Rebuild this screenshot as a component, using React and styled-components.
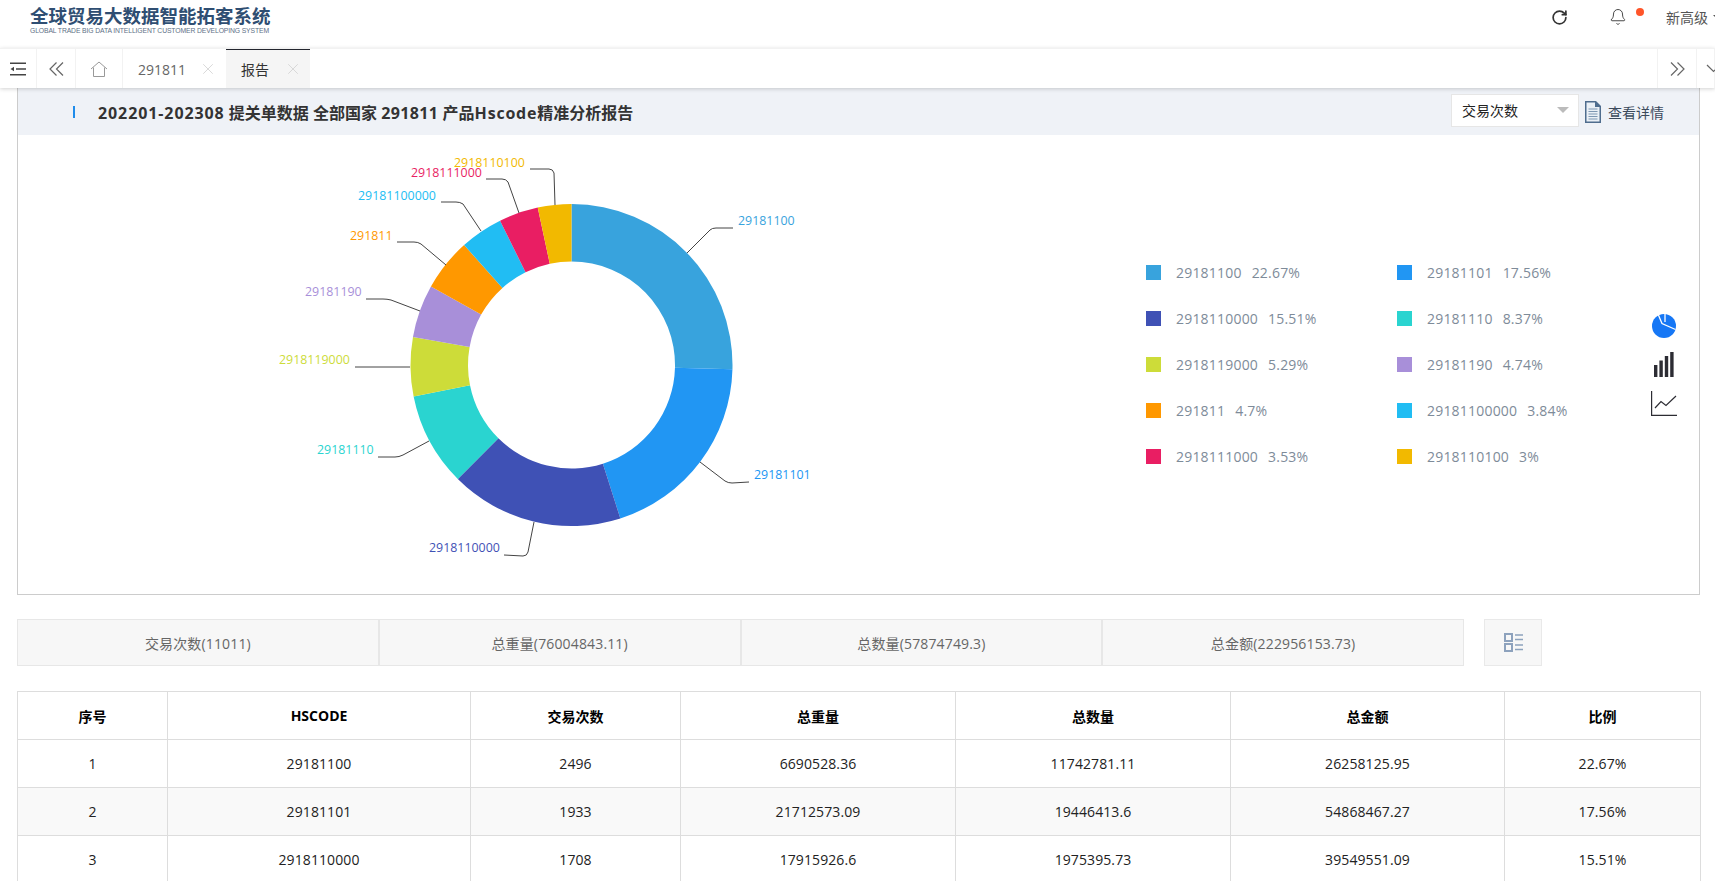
import React from 'react'
import styled, { createGlobalStyle } from 'styled-components'
import { RotateCw, Bell, X } from 'lucide-react'

const GlobalStyle = createGlobalStyle`
  html, body {
    margin: 0;
    padding: 0;
    height: 100%;
    overflow: hidden;
    background: #fff;
    font-family: "Open Sans", "Noto Sans CJK SC", sans-serif;
    font-size: 14px;
    color: #333;
  }
`

const Page = styled.div`
  height: 881px;
  overflow: hidden;
`

const Header = styled.header`
  height: 48px;
  box-sizing: border-box;
  display: flex;
  align-items: flex-start;
  padding-left: 30px;
  overflow: hidden;
`

const Logo = styled.div`
  display: flex;
  flex-direction: column;
  width: 245px;
`

const LogoTitle = styled.div`
  font-family: "Noto Sans CJK SC", sans-serif;
  font-size: 18.5px;
  font-weight: 700;
  line-height: 20px;
  margin-top: 5px;
  color: #2f4e72;
  white-space: nowrap;
`

const LogoSub = styled.div`
  font-family: "Liberation Sans", sans-serif;
  font-size: 6.8px;
  line-height: 8px;
  margin-top: 2px;
  color: #5d6f85;
  white-space: nowrap;
  letter-spacing: -0.12px;
`

const HeaderRight = styled.div`
  margin-left: auto;
  margin-right: -6px;
  height: 34px;
  display: flex;
  align-items: center;
  color: #333;
`

const Refresh = styled(RotateCw)`
  width: 17px;
  height: 17px;
  color: #333;
  margin-right: 41px;
`

const BellWrap = styled.div`
  position: relative;
  width: 18px;
  height: 18px;
  margin-right: 39px;
  color: #444;
`

const BellDot = styled.span`
  position: absolute;
  top: 0;
  left: 27px;
  width: 8px;
  height: 8px;
  border-radius: 50%;
  background: #ff5529;
`

const UserName = styled.span`
  font-size: 14px;
  color: #555;
`

const Caret = styled.span`
  margin-left: 5px;
  width: 0;
  height: 0;
  border: 4px solid transparent;
  border-top-color: #555;
  border-bottom: 0;
`

const TabBar = styled.nav`
  position: relative;
  z-index: 1;
  height: 40px;
  box-sizing: border-box;
  display: flex;
  border-top: 1px solid #f2f2f2;
  box-shadow: 0 1px 4px rgba(0, 0, 0, 0.18);
  background: #fff;
  overflow: hidden;
`

const IconCell = styled.div`
  width: ${p => p.$w}px;
  flex: none;
  box-sizing: border-box;
  display: flex;
  align-items: center;
  justify-content: center;
  border-right: 1px solid #f2f2f2;
  color: #666;
`

const Tab = styled.div`
  width: ${p => p.$w}px;
  flex: none;
  box-sizing: border-box;
  margin-top: -1px;
  padding-left: 15px;
  display: flex;
  align-items: center;
  border-top: 2px solid ${p => (p.$active ? '#23262e' : 'transparent')};
  background: ${p => (p.$active ? '#f5f5f5' : 'transparent')};
  color: ${p => (p.$active ? '#333' : '#666')};
  font-size: 14px;
`

const TabClose = styled(X)`
  width: 18px;
  height: 18px;
  margin-left: ${p => p.$gap}px;
  color: #d2d2d2;
  stroke-width: 1.1;
`

const TabRight = styled.div`
  margin-left: auto;
  display: flex;
  width: 58px;
  flex: none;
`

const LastCell = styled(IconCell)`
  border-left: 1px solid #f2f2f2;
`

const DownIcon = styled.svg`
  flex: none;
  margin-left: 16px;
`

const Main = styled.main`
  padding: 0 15px 0 17px;
`

const ReportBox = styled.section`
  border: 1px solid #ccc;
  border-top: 0;
`

const TitleBar = styled.div`
  height: 47px;
  display: flex;
  align-items: center;
  padding: 0 35px 0 55px;
  background: #eff2f7;
`

const Marker = styled.span`
  width: 2px;
  height: 12px;
  margin: 0 23px 0 0;
  background: #1f8ceb;
`

const Title = styled.h2`
  margin: 0;
  font-size: 16px;
  font-weight: 700;
  color: #333;
`

const WideRun = styled.span`
  letter-spacing: ${p => p.$gap}px;
`

const Picker = styled.div`
  margin-left: auto;
  width: 128px;
  height: 33px;
  box-sizing: border-box;
  padding: 0 9px 0 10px;
  margin-top: -3px;
  display: flex;
  align-items: center;
  justify-content: space-between;
  background: #fff;
  border: 1px solid #e6e6e6;
  color: #222;
  font-size: 14px;
`

const PickerArrow = styled.span`
  width: 0;
  height: 0;
  border-style: solid;
  border-width: 6px 6px 0;
  border-color: #bbb transparent transparent;
`

const DetailLink = styled.a`
  display: flex;
  align-items: center;
  gap: 7px;
  margin-left: 6px;
  color: #3b4a5c;
  font-size: 14px;
`

const ChartBody = styled.div`
  height: 459px;
  display: flex;
  align-items: center;
`

const ChartSvg = styled.svg`
  flex: none;
  width: 800px;
  height: 459px;
  font-family: "Open Sans", sans-serif;
  font-size: 12.4px;
`

const Legend = styled.ul`
  list-style: none;
  margin: 0 0 1px 328px;
  padding: 0;
  flex: none;
  width: 502px;
  display: grid;
  grid-template-columns: 251px 251px;
  grid-auto-rows: 46px;
  align-items: center;
`

const LegendItem = styled.li`
  display: flex;
  align-items: center;
  color: #7e8b99;
  font-size: 14px;
  letter-spacing: 0.2px;
`

const Swatch = styled.span`
  width: 15px;
  height: 15px;
  margin-right: 15px;
  background: ${p => p.$color};
`

const Percent = styled.span`
  margin-left: 10px;
`

const ChartTypes = styled.div`
  margin-left: 3px;
  display: flex;
  flex-direction: column;
  align-items: center;
  gap: 14px;
  width: 26px;
`

const Stats = styled.div`
  margin-top: 24px;
  display: flex;
  gap: 20px;
`

const StatGroup = styled.div`
  width: 1447px;
  display: flex;
`

const Stat = styled.div`
  flex: 1;
  height: 47px;
  box-sizing: border-box;
  display: flex;
  align-items: center;
  justify-content: center;
  background: #f7f7f7;
  border: 1px solid #e7e7e7;
  color: #666;
  font-size: 14px;
  letter-spacing: 0.15px;
`

const ListButton = styled.button`
  width: 58px;
  height: 47px;
  padding: 0;
  display: flex;
  align-items: center;
  justify-content: center;
  background: #f7f7f7;
  border: 1px solid #e9e9e9;
`

const Table = styled.table`
  margin-top: 25px;
  width: 1683px;
  table-layout: fixed;
  border-collapse: collapse;
  font-size: 14px;
  color: #222;

  th, td {
    height: 48px;
    padding: 0;
    box-sizing: border-box;
    text-align: center;
    border: 1px solid #ddd;
  }

  th {
    font-weight: 700;
    color: #000;
  }

  td {
    letter-spacing: 0.1px;
  }

  tbody tr:nth-child(even) {
    background: #f9f9f9;
  }
`

const slices = [
  { name: '29181100', pct: 22.67, color: '#38a3dd', text: [738, 225], line: 'M687 253 L710 230 Q712 228 716 228 L733 228' },
  { name: '29181101', pct: 17.56, color: '#2196f3', text: [754, 479], line: 'M700 462 L725 481 Q728 483 732 483 L749 482' },
  { name: '2918110000', pct: 15.51, color: '#3f51b5', text: [429, 552], line: 'M534 522 L528 552 Q527 556 523 556 L504 555' },
  { name: '29181110', pct: 8.37, color: '#2ad4d0', text: [317, 454], line: 'M429 441 L403 455 Q399 457 395 457 L378 457' },
  { name: '2918119000', pct: 5.29, color: '#cddc39', text: [279, 364], line: 'M410 367 L355 367' },
  { name: '29181190', pct: 4.74, color: '#a88fd9', text: [305, 296], line: 'M420 311 L391 300 Q387 299 383 299 L366 299' },
  { name: '291811', pct: 4.7, color: '#ff9800', text: [350, 240], line: 'M446 265 L421 244 Q418 242 414 242 L397 242' },
  { name: '29181100000', pct: 3.84, color: '#21bdf3', text: [358, 200], line: 'M481 231 L463 204 Q460 202 456 202 L441 202' },
  { name: '2918111000', pct: 3.53, color: '#e91e63', text: [411, 177], line: 'M519 213 L508 182 Q506 179 502 179 L486 179' },
  { name: '2918110100', pct: 3, color: '#f2b900', text: [454, 167], line: 'M555 205 L554 173 Q553 169 549 169 L530 169' }
]

const CX = 571.5
const CY = 365
const R1 = 161
const R0 = 103.5

function arcPath (start, end) {
  const pt = (r, a) => [CX + r * Math.sin(a), CY - r * Math.cos(a)].map(n => n.toFixed(2)).join(' ')
  const large = end - start > Math.PI ? 1 : 0
  return `M${pt(R1, start)} A${R1} ${R1} 0 ${large} 1 ${pt(R1, end)} L${pt(R0, end)} A${R0} ${R0} 0 ${large} 0 ${pt(R0, start)} Z`
}

function Donut () {
  const total = slices.reduce((sum, s) => sum + s.pct, 0)
  let angle = 0
  return (
    <ChartSvg viewBox="18 135 800 459">
      {slices.map(s => {
        const start = angle
        angle += (s.pct / total) * Math.PI * 2
        return <path key={s.name} d={arcPath(start, angle)} fill={s.color} />
      })}
      {slices.map(s => (
        <g key={s.name}>
          <path d={s.line} fill="none" stroke="#444" strokeWidth="1" />
          <text x={s.text[0]} y={s.text[1]} fill={s.color}>{s.name}</text>
        </g>
      ))}
    </ChartSvg>
  )
}

const stats = ['交易次数(11011)', '总重量(76004843.11)', '总数量(57874749.3)', '总金额(222956153.73)']

const columns = [150, 303, 210, 275, 275, 274, 196]
const headers = ['序号', 'HSCODE', '交易次数', '总重量', '总数量', '总金额', '比例']
const rows = [
  ['1', '29181100', '2496', '6690528.36', '11742781.11', '26258125.95', '22.67%'],
  ['2', '29181101', '1933', '21712573.09', '19446413.6', '54868467.27', '17.56%'],
  ['3', '2918110000', '1708', '17915926.6', '1975395.73', '39549551.09', '15.51%']
]

function MenuIcon () {
  return (
    <svg width="16" height="14" viewBox="0 0 16 14" fill="none" stroke="#444" strokeWidth="1.5">
      <path d="M0 1.2H16M0 12.8H16M6 7H16" />
      <path d="M0.5 7L4 4.8V9.2Z" fill="#444" stroke="none" />
    </svg>
  )
}

function ChevronsIcon ({ flip }) {
  return (
    <svg width="15" height="14" viewBox="0 0 15 14" fill="none" stroke="#666" strokeWidth="1.2">
      <path d={flip ? 'M1 0.5L7.5 7L1 13.5M7.5 0.5L14 7L7.5 13.5' : 'M7.5 0.5L1 7L7.5 13.5M14 0.5L7.5 7L14 13.5'} />
    </svg>
  )
}

function HomeIcon () {
  return (
    <svg width="18" height="16" viewBox="0 0 18 16" fill="none" stroke="#999" strokeWidth="1">
      <path d="M1 8L9 1L17 8M3.5 6.5V15.5H14.5V6.5" />
    </svg>
  )
}

function DocIcon () {
  return (
    <svg width="16" height="22" viewBox="0 0 16 22">
      <path d="M0 0H11L16 5V22H0Z" fill="#4f6d8e" />
      <path d="M1.5 1.5H10V6H14.5V20.5H1.5Z" fill="#eaf0f6" />
      <path d="M3.5 8H12.5M3.5 10.5H12.5M3.5 13H12.5M3.5 15.5H12.5M3.5 18H12.5" stroke="#7d97b3" strokeWidth="1" />
    </svg>
  )
}

function PieIcon () {
  return (
    <svg width="24" height="25" viewBox="0 0 24 25">
      <circle cx="12" cy="13" r="12" fill="#1677f5" />
      <path d="M6 1L10 10.5L23.5 16.5M13 0V9" fill="none" stroke="#fff" strokeWidth="1.3" />
    </svg>
  )
}

function BarsIcon () {
  return (
    <svg width="20" height="25" viewBox="0 0 20 25" fill="#2c2c33">
      <rect x="0" y="13" width="3.4" height="12" />
      <rect x="5.4" y="8.5" width="3.4" height="16.5" />
      <rect x="10.8" y="4" width="3.4" height="21" />
      <rect x="16.2" y="0" width="3.4" height="25" />
    </svg>
  )
}

function LineIcon () {
  return (
    <svg width="26" height="25" viewBox="0 0 26 25" fill="none" stroke="#2c2c33" strokeWidth="1.2">
      <path d="M0.6 0V24.4H26" />
      <path d="M4 17L10 10.5L15 14.5L25 5" />
    </svg>
  )
}

function ListIcon () {
  return (
    <svg width="19" height="20" viewBox="0 0 19 20" fill="none" stroke="#8da2bd" strokeWidth="2">
      <rect x="1" y="1" width="7" height="7" />
      <rect x="1" y="11" width="7" height="7" />
      <path d="M11 2H19M11 6.5H19M11 12H19M11 16.5H19" strokeWidth="1.4" />
    </svg>
  )
}

export default function App () {
  return (
    <Page>
      <GlobalStyle />
      <Header>
        <Logo>
          <LogoTitle>全球贸易大数据智能拓客系统</LogoTitle>
          <LogoSub>GLOBAL TRADE BIG DATA INTELLIGENT CUSTOMER DEVELOPING SYSTEM</LogoSub>
        </Logo>
        <HeaderRight>
          <Refresh strokeWidth={2.4} />
          <BellWrap>
            <Bell size={18} strokeWidth={1.3} />
            <BellDot />
          </BellWrap>
          <UserName>新高级</UserName>
          <Caret />
        </HeaderRight>
      </Header>

      <TabBar>
        <IconCell $w={37}><MenuIcon /></IconCell>
        <IconCell $w={39}><ChevronsIcon /></IconCell>
        <IconCell $w={47}><HomeIcon /></IconCell>
        <Tab $w={103}>291811<TabClose $gap={13} /></Tab>
        <Tab $w={84} $active>报告<TabClose $gap={15} /></Tab>
        <TabRight>
          <LastCell $w={40}><ChevronsIcon flip /></LastCell>
          <IconCell $w={18}>
            <DownIcon width="15" height="9" viewBox="0 0 15 9" fill="none" stroke="#666" strokeWidth="1.2">
              <path d="M1 1L7.5 7.5L14 1" />
            </DownIcon>
          </IconCell>
        </TabRight>
      </TabBar>

      <Main>
        <ReportBox>
          <TitleBar>
            <Marker />
            <Title>
              <WideRun $gap={0.9}>202201-202308</WideRun> 提关单数据 全部国家 <WideRun $gap={0.4}>291811</WideRun> 产品<WideRun $gap={0.8}>Hscode</WideRun>精准分析报告
            </Title>
            <Picker>交易次数<PickerArrow /></Picker>
            <DetailLink><DocIcon />查看详情</DetailLink>
          </TitleBar>
          <ChartBody>
            <Donut />
            <Legend>
              {slices.map(s => (
                <LegendItem key={s.name}>
                  <Swatch $color={s.color} />
                  {s.name}
                  <Percent>{s.pct}%</Percent>
                </LegendItem>
              ))}
            </Legend>
            <ChartTypes>
              <PieIcon />
              <BarsIcon />
              <LineIcon />
            </ChartTypes>
          </ChartBody>
        </ReportBox>

        <Stats>
          <StatGroup>
            {stats.map(s => <Stat key={s}>{s}</Stat>)}
          </StatGroup>
          <ListButton><ListIcon /></ListButton>
        </Stats>

        <Table>
          <colgroup>
            {columns.map((w, i) => <col key={i} width={w} />)}
          </colgroup>
          <thead>
            <tr>{headers.map(h => <th key={h}>{h}</th>)}</tr>
          </thead>
          <tbody>
            {rows.map(r => (
              <tr key={r[0]}>{r.map((c, i) => <td key={i}>{c}</td>)}</tr>
            ))}
          </tbody>
        </Table>
      </Main>
    </Page>
  )
}
